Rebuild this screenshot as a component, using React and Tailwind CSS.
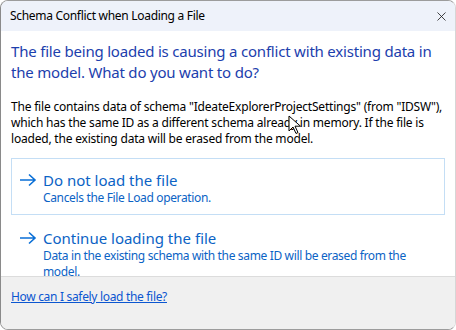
import { X } from 'lucide-react'

function Arrow() {
  return (
    <svg width="18" height="14" viewBox="0 0 18 14" fill="none" className="shrink-0">
      <path d="M1 7h15M10 1.5 16 7l-6 5.5" stroke="#0a6fd6" strokeWidth="1.6" />
    </svg>
  )
}

function Option({ title, desc, bordered }) {
  return (
    <div
      className={`flex gap-[6px] pl-[7px] pr-3 pt-[11px] pb-[8px] border ${
        bordered ? 'border-[#c4def5]' : 'border-transparent'
      }`}
    >
      <div className="h-[20px] flex items-center">
        <Arrow />
      </div>
      <div className="text-[#0b63c5]">
        <div className="text-[15px] leading-[20px]">{title}</div>
        <div className="text-[12px] leading-[16px] tracking-[-0.35px]">{desc}</div>
      </div>
    </div>
  )
}

function Cursor() {
  return (
    <svg width="14" height="20" viewBox="0 0 14 20" className="absolute left-[287px] top-[114px]">
      <path d="M1 1v15l4-4 3 6.5 2-1-3-6.3h5.5z" fill="#fff" stroke="#000" strokeWidth="1" strokeLinejoin="round" />
    </svg>
  )
}

export default function App() {
  return (
    <div
      className="relative w-[456px] h-[330px] flex flex-col bg-white rounded-[8px] overflow-hidden border border-[#9c9c9c] border-l-[#8a8a8a] border-r-[#d6d6d6] text-black"
      style={{ fontFamily: '"Segoe UI", "Noto Sans", sans-serif' }}
    >
      <div className="h-[30px] shrink-0 flex items-center justify-between pl-[9px] pr-[6px] bg-[#eef2fa]">
        <span className="text-[12px] tracking-[-0.3px]">Schema Conflict when Loading a File</span>
        <X size={15} strokeWidth={1.3} className="text-[#1a1a1a]" />
      </div>

      <div className="flex-1 min-h-0 overflow-hidden px-[10px] pt-[10px]">
        <h1 className="text-[15px] leading-[21px] text-[#1c40ad] tracking-[-0.2px]">
          The file being loaded is causing a conflict with existing data in the model. What do you want to do?
        </h1>
        <p className="mt-[16px] text-[12px] leading-[16px] tracking-[-0.2px]">
          The file contains data of schema "IdeateExplorerProjectSettings" (from "IDSW"), which has the same ID as a
          different schema already in memory. If the file is loaded, the existing data will be erased from the model.
        </p>
        <div className="mt-[11px] flex flex-col gap-[1px]">
          <Option title="Do not load the file" desc="Cancels the File Load operation." bordered />
          <Option
            title="Continue loading the file"
            desc="Data in the existing schema with the same ID will be erased from the model."
          />
        </div>
      </div>

      <div className="h-[53px] shrink-0 bg-[#f0f0f0] border-t border-[#dcdcdc] px-[10px] pt-[6px]">
        <a href="#" className="text-[12px] leading-[16px] text-[#0b56d0] underline tracking-[-0.32px]">
          How can I safely load the file?
        </a>
      </div>

      <Cursor />
    </div>
  )
}
